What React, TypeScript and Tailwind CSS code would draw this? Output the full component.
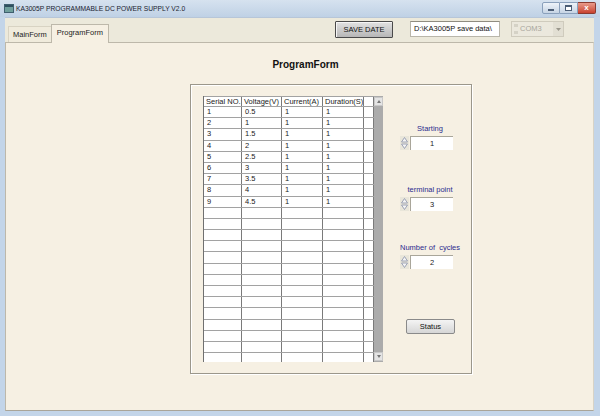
import React from 'react';

const ROWS: string[][] = [
  ['1', '0.5', '1', '1'],
  ['2', '1', '1', '1'],
  ['3', '1.5', '1', '1'],
  ['4', '2', '1', '1'],
  ['5', '2.5', '1', '1'],
  ['6', '3', '1', '1'],
  ['7', '3.5', '1', '1'],
  ['8', '4', '1', '1'],
  ['9', '4.5', '1', '1'],
];

const HEADERS = ['Serial NO.', 'Voltage(V)', 'Current(A)', 'Duration(S)', ''];
const COL_W = ['w-[38px]', 'w-[40px]', 'w-[41px]', 'w-[41px]', 'w-[10px]'];
const EMPTY_ROWS = 15;

// small up/down arrows next to the numeric boxes
const SpinArrows = () => (
  <svg width="9" height="14" viewBox="0 0 9 14">
    <rect x="0" y="0" width="9" height="14" fill="#e9e6da" />
    <path d="M4.5 1.5 L7.5 6 L1.5 6 Z" fill="#f4f4f4" stroke="#8a92aa" strokeWidth="0.8" />
    <path d="M4.5 12.5 L7.5 8 L1.5 8 Z" fill="#f4f4f4" stroke="#8a92aa" strokeWidth="0.8" />
  </svg>
);

const Spinner = ({ value }: { value: string }) => (
  <div className="flex items-center h-[14px]">
    <SpinArrows />
    <div className="ml-[1px] w-[43px] h-[14px] bg-white border-t border-l border-[#a9a69a] text-center text-[7.5px] leading-[13px] text-[#222]">
      {value}
    </div>
  </div>
);

const Label = ({ children }: { children: React.ReactNode }) => (
  <div className="w-[60px] text-center text-[7.5px] leading-[9px] text-[#2b2b8e] whitespace-pre">{children}</div>
);

const App: React.FC = () => {
  return (
    <div className="w-[600px] h-[416px] bg-[#c3d5e9] flex flex-col font-['Liberation_Sans',Arial,sans-serif] overflow-hidden select-none">
      {/* Title bar */}
      <div className="h-[17px] flex items-center bg-gradient-to-b from-[#d6e2ef] to-[#bfd1e5] pl-[4px] pr-[4px]">
        <div className="w-[10px] h-[9px] border border-[#3f5f6f] bg-[#6f9f9c] flex flex-col">
          <div className="h-[2px] bg-[#2f4f5f]" />
        </div>
        <span className="ml-[2px] text-[6.7px] leading-[9px] text-[#1b2330]">KA3005P PROGRAMMABLE DC POWER SUPPLY V2.0</span>
        <div className="ml-auto flex items-start self-start mt-[2px]">
          <div className="w-[18px] h-[12px] border border-[#8aa0bb] rounded-l-[2px] bg-gradient-to-b from-[#eef3f9] to-[#c6d4e4] flex items-center justify-center">
            <div className="w-[6px] h-[2px] border border-[#4b5d75] bg-white mt-[3px]" />
          </div>
          <div className="w-[18px] h-[12px] border-y border-r border-[#8aa0bb] bg-gradient-to-b from-[#eef3f9] to-[#c6d4e4] flex items-center justify-center">
            <div className="w-[7px] h-[6px] border border-[#4b5d75] border-t-2 bg-white" />
          </div>
          <div className="w-[18px] h-[12px] border-y border-r border-[#8a3a30] rounded-r-[2px] bg-gradient-to-b from-[#e89a8a] to-[#c8402e] flex items-center justify-center text-white text-[8px] leading-[8px] font-bold">
            x
          </div>
        </div>
      </div>

      {/* Client area */}
      <div className="flex-1 ml-[5px] mr-[6px] mb-[5px] bg-[#ece9db] flex flex-col border-t border-[#b7c6d8]">
        {/* Tab strip + controls */}
        <div className="h-[24px] flex">
          <div className="flex items-end ml-[3px]">
            <div className="h-[16px] px-[4px] border-t border-l border-[#d8d3c3] bg-[#f0ebdc] text-[7.5px] leading-[15px] text-[#222]">
              MainForm
            </div>
            <div className="h-[19px] px-[5px] border-t border-l border-r border-[#bdb8aa] bg-[#f6f0e3] text-[7.5px] leading-[16px] text-[#222] -mb-[1px] relative">
              ProgramForm
            </div>
          </div>
          <div className="ml-auto mr-[30px] flex items-start pt-[3px]">
            <div className="w-[58px] h-[17px] border border-[#4a4a4a] rounded-[1px] bg-gradient-to-b from-[#e2e2e2] to-[#b7b7b7] text-center text-[7.5px] leading-[15px] text-[#111] shadow-[inset_1px_1px_0_#f5f5f5]">
              SAVE DATE
            </div>
            <div className="ml-[17px] w-[90px] h-[16px] bg-white border border-[#b9b6aa] border-t-[#8f8c80] pl-[3px] text-[7.5px] leading-[14px] text-[#111]">
              D:\KA3005P save data\
            </div>
            <div className="ml-[11px] w-[53px] h-[16px] bg-[#ebe8dd] border border-[#cfcbbd] flex items-center">
              <div className="w-[4px] h-[10px] ml-[2px] flex flex-col justify-between">
                <div className="h-[3px] bg-[#d5d2c6]" />
                <div className="h-[3px] bg-[#d5d2c6]" />
              </div>
              <span className="ml-[2px] text-[7.5px] text-[#a8a69c]">COM3</span>
              <div className="ml-auto w-[10px] h-[14px] bg-[#e2dfd3] flex items-center justify-center">
                <svg width="5" height="3" viewBox="0 0 5 3">
                  <path d="M0 0 L5 0 L2.5 3 Z" fill="#9a978c" />
                </svg>
              </div>
            </div>
          </div>
        </div>

        {/* Tab page */}
        <div className="flex-1 bg-[#f6f0e3] border border-[#bdb8aa] border-r-[#d8d3c6] border-b-[#a9a599] flex flex-col">
          <div className="mt-[16px] pl-[12px] text-center text-[10px] leading-[12px] font-bold text-[#111]">ProgramForm</div>

          <div className="mt-[13px] ml-[184px] w-[282px] h-[290px] border border-[#9b978b] shadow-[inset_1px_1px_0_#ffffff,1px_1px_0_#ffffff] flex pt-[11px] pl-[12px]">
            {/* Grid */}
            <div className="w-[180px] h-[266px] flex bg-white border-l border-[#707070] overflow-hidden">
              <div className="w-[170px] flex flex-col">
                <div className="h-[11px] flex border-t border-b border-[#a2a2a2] shrink-0">
                  {HEADERS.map((h, i) => (
                    <div key={i} className={`${COL_W[i]} shrink-0 border-r border-[#7a7a7a] pl-[2px] text-[7.5px] leading-[10px] text-[#222] whitespace-nowrap overflow-hidden`}>
                      {h}
                    </div>
                  ))}
                </div>
                {ROWS.map((r, ri) => (
                  <div key={ri} className="h-[11.2px] flex border-b border-[#a2a2a2] shrink-0">
                    {[...r, ''].map((c, i) => (
                      <div key={i} className={`${COL_W[i]} shrink-0 border-r border-[#7a7a7a] pl-[3px] text-[7.5px] leading-[10px] text-[#222]`}>
                        {c}
                      </div>
                    ))}
                  </div>
                ))}
                {Array.from({ length: EMPTY_ROWS }).map((_, ri) => (
                  <div key={ri} className="h-[11.2px] flex border-b border-[#a2a2a2] shrink-0">
                    {COL_W.map((w, i) => (
                      <div key={i} className={`${w} shrink-0 border-r border-[#7a7a7a]`} />
                    ))}
                  </div>
                ))}
              </div>
              {/* Scrollbar */}
              <div className="w-[10px] bg-[#ababab] flex flex-col justify-between py-[1px]">
                <div className="h-[9px] bg-[#e4e4e4] border border-[#c8c8c8] flex items-center justify-center">
                  <svg width="4" height="3" viewBox="0 0 4 3"><path d="M2 0 L4 3 L0 3 Z" fill="#777" /></svg>
                </div>
                <div className="h-[9px] bg-[#e4e4e4] border border-[#c8c8c8] flex items-center justify-center">
                  <svg width="4" height="3" viewBox="0 0 4 3"><path d="M0 0 L4 0 L2 3 Z" fill="#777" /></svg>
                </div>
              </div>
            </div>

            {/* Right controls */}
            <div className="ml-[17px] flex flex-col">
              <div className="mt-[28px]"><Label>Starting</Label></div>
              <div className="mt-[3px]"><Spinner value="1" /></div>
              <div className="mt-[35px]"><Label>terminal point</Label></div>
              <div className="mt-[3px]"><Spinner value="3" /></div>
              <div className="mt-[32px]"><Label>Number of  cycles</Label></div>
              <div className="mt-[3px]"><Spinner value="2" /></div>
              <div className="mt-[50px] ml-[6px] w-[49px] h-[15px] border border-[#8a8a8a] rounded-[2px] bg-gradient-to-b from-[#f4f4f4] to-[#d6d6d6] text-center text-[7.5px] leading-[13px] text-[#111]">
                Status
              </div>
            </div>
          </div>
        </div>
      </div>
    </div>
  );
};

export default App;
